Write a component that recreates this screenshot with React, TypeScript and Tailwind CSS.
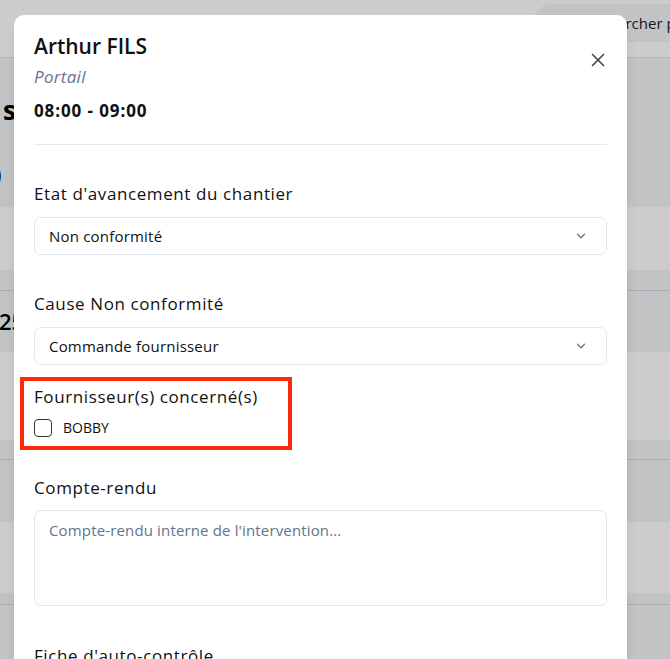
import React from "react";

const font = { fontFamily: '"Open Sans", "Noto Sans", Arial, sans-serif' };

function Chevron() {
  return (
    <svg width="14" height="14" viewBox="0 0 24 24" fill="none" stroke="#6b7280" strokeWidth="2.2" strokeLinecap="round" strokeLinejoin="round">
      <path d="M6 9l6 6 6-6" />
    </svg>
  );
}

function SelectBox({ value }: { value: string }) {
  return (
    <div className="flex h-[38px] items-center justify-between rounded-[7px] border border-[#e2e8f0] bg-white pl-[14px] pr-[18px]">
      <span className="text-[15px] tracking-[0.2px] text-[#111]">{value}</span>
      <Chevron />
    </div>
  );
}

const label = "text-[17px] leading-[24px] tracking-[0.6px] text-[#111]";

export default function App() {
  return (
    <div className="relative h-[659px] w-[670px] overflow-hidden bg-gray-100" style={font}>
      {/* page behind the dialog */}
      <div className="flex flex-col">
        <div className="flex h-[58px] items-start justify-end border-b border-[#dfe3e8] bg-white pt-[4px]">
          <div className="flex h-[38px] w-[137px] items-center gap-[14px] overflow-hidden rounded-l-full bg-gray-100 pl-[22px]">
            <svg className="shrink-0" width="14" height="14" viewBox="0 0 24 24" fill="none" stroke="#333" strokeWidth="2.4">
              <circle cx="11" cy="11" r="7" />
              <path d="M20 20l-4-4" />
            </svg>
            <span className="whitespace-nowrap text-[15px] text-[#222]">Rechercher par</span>
          </div>
        </div>
        <div className="h-[149px] bg-gray-100">
          <div className="ml-[3px] mt-[36px] text-[26px] font-bold leading-[32px] text-black">s</div>
          <div className="-ml-[6px] mt-[32px] text-[24px] font-semibold leading-[32px] text-black">)</div>
        </div>
        <div className="h-[63px] bg-white" />
        <div className="h-[21px] border-b border-[#d4d8de] bg-gray-100" />
        <div className="flex h-[61px] items-center bg-gray-100">
          <span className="-ml-[1px] text-[22px] font-semibold text-black">25</span>
        </div>
        <div className="h-[88px] bg-white" />
        <div className="h-[20px] border-b border-[#d4d8de] bg-gray-100" />
        <div className="h-[62px] bg-gray-100" />
        <div className="h-[71px] bg-white" />
        <div className="h-[12px] border-b border-[#d4d8de] bg-gray-100" />
        <div className="flex h-[60px] items-center bg-gray-100">
          <span className="-ml-[7px] text-[24px] font-semibold text-black">)</span>
        </div>
      </div>

      {/* backdrop */}
      <div className="absolute inset-0 bg-black/20" />

      {/* dialog */}
      <div className="absolute left-[14px] top-[15px] w-[613px] rounded-[10px] bg-white px-[20px] pb-[40px] pt-[16px] shadow-lg">
        <button className="absolute right-[22px] top-[38px] text-[#444]">
          <svg width="14" height="14" viewBox="0 0 14 14" fill="none" stroke="#444" strokeWidth="1.6" strokeLinecap="round">
            <path d="M1.5 1.5l11 11M12.5 1.5l-11 11" />
          </svg>
        </button>
        <h2 className="text-[21px] font-semibold leading-[30px] text-[#111]">Arthur FILS</h2>
        <p className="mt-[2px] text-[17px] italic leading-[28px] tracking-[0.3px] text-[#64748b]">Portail</p>
        <p className="mt-[6px] text-[17px] font-bold leading-[28px] tracking-[0.9px] text-[#111]">08:00 - 09:00</p>
        <div className="mt-[19px] h-px bg-[#e5e9f0]" />

        <div className="mt-[37px]">
          <div className={label}>Etat d'avancement du chantier</div>
          <div className="mt-[11px]">
            <SelectBox value="Non conformité" />
          </div>
        </div>

        <div className="mt-[37px]">
          <div className={label}>Cause Non conformité</div>
          <div className="mt-[11px]">
            <SelectBox value="Commande fournisseur" />
          </div>
        </div>

        <div className="-ml-[14px] mt-[12px] w-[272px] border-4 border-[#ff2a0a] pb-[8px] pl-[10px] pt-[4px]">
          <div className={label}>Fournisseur(s) concerné(s)</div>
          <label className="mt-[8px] flex items-center gap-[11px]">
            <span className="h-[18px] w-[18px] rounded-[4px] border-[1.5px] border-[#333] bg-white" />
            <span className="text-[14px] text-[#111]">BOBBY</span>
          </label>
        </div>

        <div className="mt-[26px]">
          <div className={label}>Compte-rendu</div>
          <div className="mt-[10px] h-[96px] rounded-[7px] border border-[#e2e8f0] px-[14px] pt-[8px] text-[15px] tracking-[0.15px] text-[#64748b]">
            Compte-rendu interne de l'intervention...
          </div>
        </div>

        <div className={`mt-[38px] ${label}`}>Fiche d'auto-contrôle</div>
      </div>
    </div>
  );
}
